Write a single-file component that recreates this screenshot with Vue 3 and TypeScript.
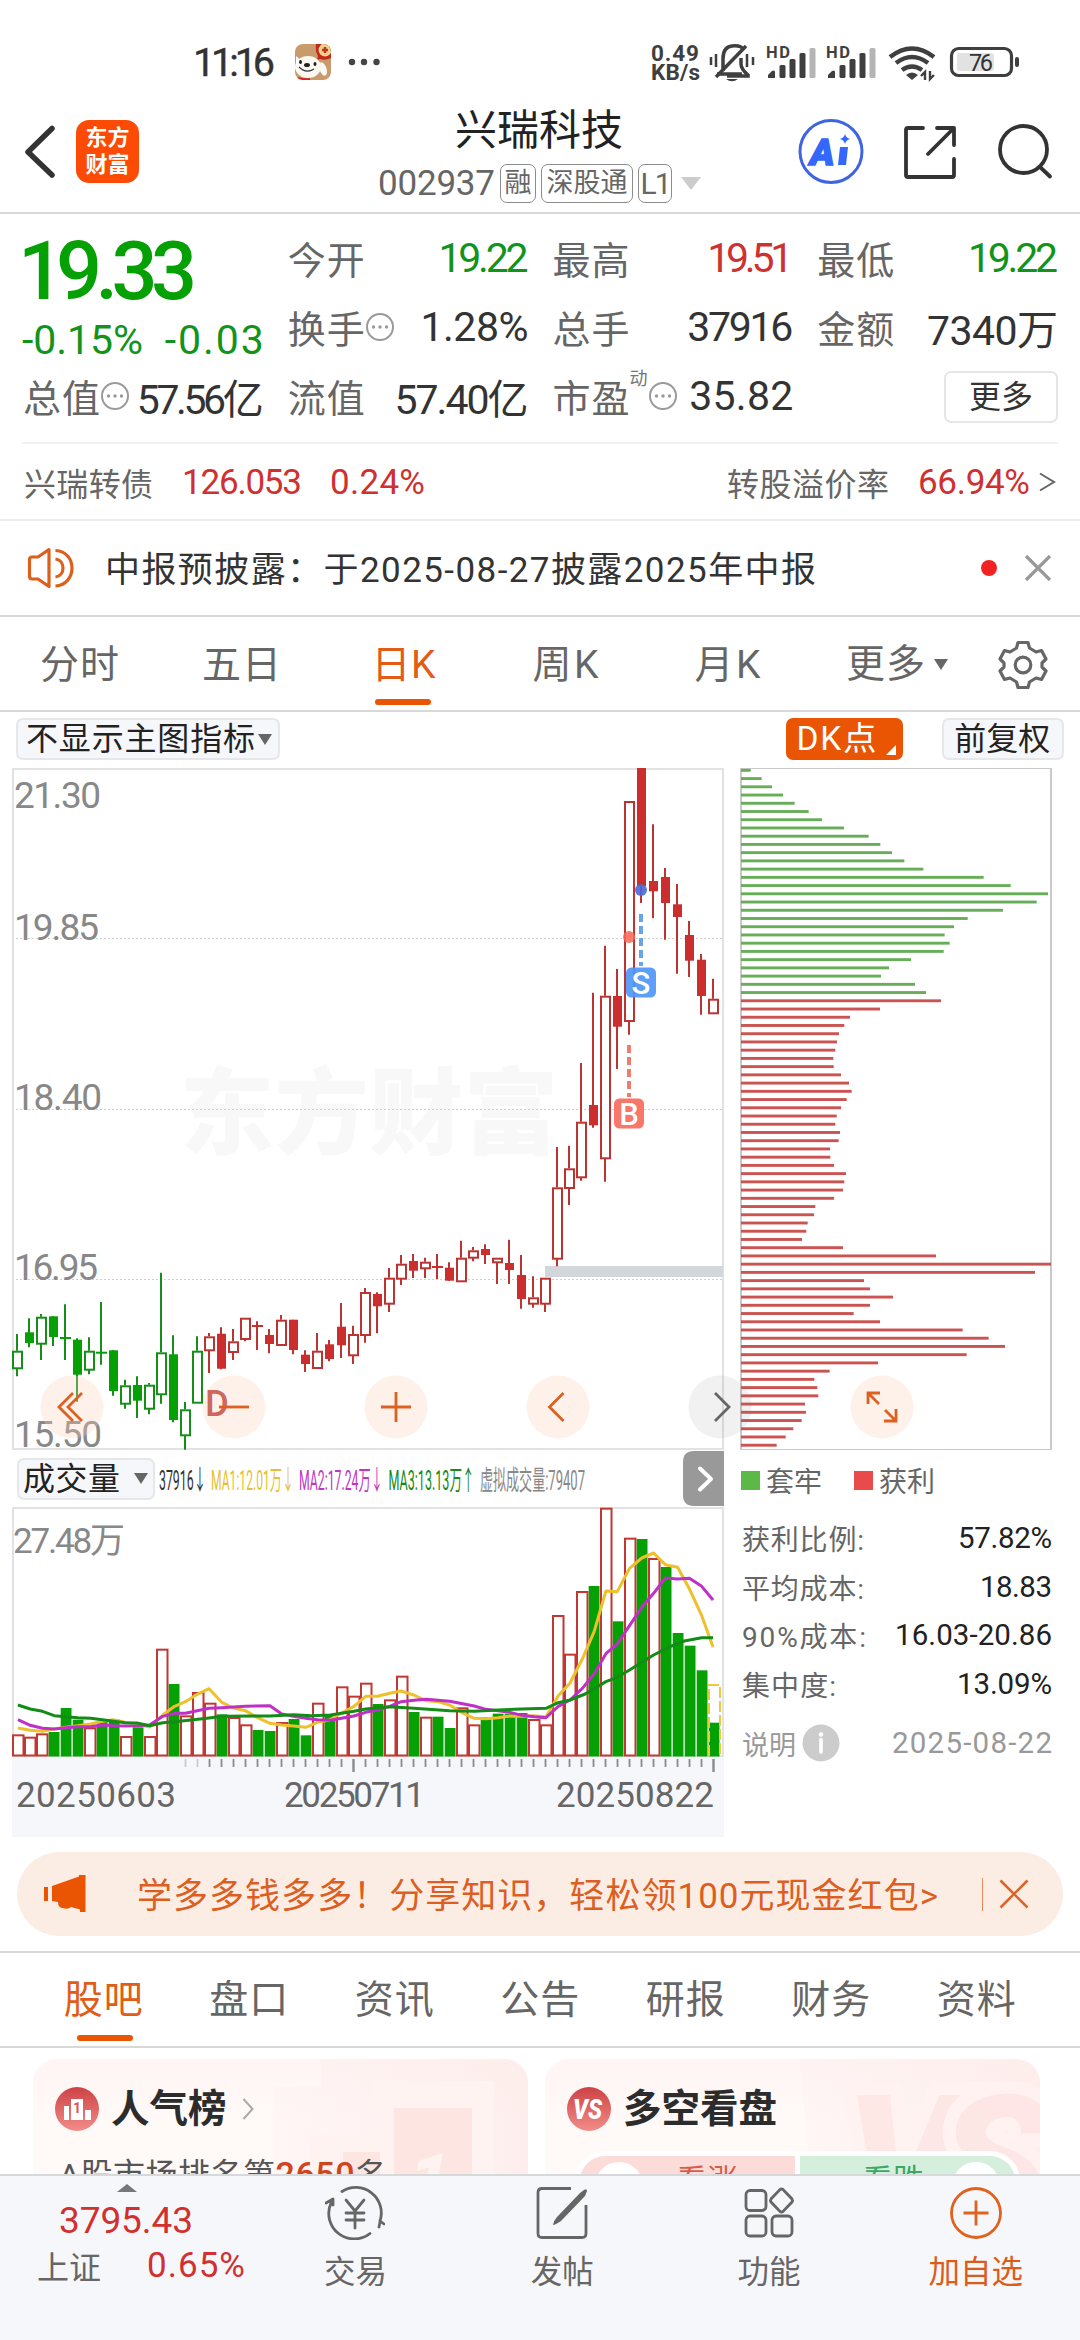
<script setup lang="ts">
import type { Directive } from 'vue'

/* Spreads the letters of a label over a fixed advance width. */
const vFit: Directive<HTMLElement, number> = {
  mounted(el, binding) {
    const count = Array.from((el.textContent ?? '').trim()).length
    if (count < 2) return
    const step = (binding.value - el.getBoundingClientRect().width) / (count - 1)
    el.style.letterSpacing = step.toFixed(3) + 'px'
    el.style.marginRight = (-step).toFixed(3) + 'px'
  },
}

interface Quote { label: string; value: string; tone?: string; width: number; info?: boolean; sup?: string }
const quotes: Quote[] = [
  { label: '今开', value: '19.22', tone: 'down', width: 90 },
  { label: '最高', value: '19.51', tone: 'up', width: 86 },
  { label: '最低', value: '19.22', tone: 'down', width: 90 },
  { label: '换手', value: '1.28%', width: 108, info: true },
  { label: '总手', value: '37916', width: 106 },
  { label: '金额', value: '7340万', width: 131 },
  { label: '总值', value: '57.56亿', width: 127, info: true },
  { label: '流值', value: '57.40亿', width: 134 },
  { label: '市盈', value: '35.82', width: 104, info: true, sup: '动' },
]

/* [high, body top, body bottom, low, kind]  kind: 0 hollow, 1 filled, 2 cross */
const candles: number[][] = [
  [1335, 1351.7, 1369.3, 1377.3, 0], [1319.3, 1333.3, 1344, 1348.3, 1], [1315, 1317.7, 1344.7, 1361, 0],
  [1317.3, 1317.3, 1338, 1347, 1], [1305.3, 1338, 1340, 1361, 2], [1339.3, 1340.7, 1375.7, 1402.7, 1],
  [1338.3, 1351.7, 1370.7, 1375.3, 0], [1303, 1352.7, 1354.7, 1365.7, 2], [1351.3, 1351.3, 1392, 1396.7, 1],
  [1380.7, 1386.3, 1404.7, 1409.7, 0], [1377.3, 1386, 1401.7, 1419, 1], [1384, 1385.7, 1409.7, 1415.3, 0],
  [1273.7, 1353.3, 1395.3, 1404.7, 0], [1336.3, 1355.3, 1421, 1423.3, 1], [1403, 1410.3, 1436.3, 1450.7, 0],
  [1337.3, 1351.7, 1403.7, 1403.7, 0], [1334, 1337.3, 1351.3, 1374, 0], [1328.3, 1334.7, 1369.7, 1370.3, 1],
  [1330, 1342.3, 1353, 1361, 0], [1318.7, 1318.7, 1340, 1342.3, 0], [1322.3, 1326, 1328, 1351, 2],
  [1330, 1336, 1345, 1354.3, 1], [1316, 1320.7, 1346, 1346, 0], [1320.7, 1320.7, 1351, 1355.3, 1],
  [1351.3, 1355.7, 1365, 1373, 1], [1334, 1351.7, 1369, 1369, 0], [1341, 1345.3, 1360, 1362.3, 1],
  [1304, 1327.7, 1346.3, 1359, 1], [1326.7, 1335, 1356.3, 1365, 0], [1289, 1293, 1336, 1343.7, 0],
  [1293.3, 1295, 1307.3, 1334.3, 1], [1269, 1278.7, 1304.7, 1313, 0], [1256, 1264.7, 1279.7, 1286, 0],
  [1255, 1262, 1271.7, 1279, 1], [1258.7, 1262.7, 1269.3, 1279, 0], [1255, 1267, 1269, 1280, 2],
  [1263.3, 1268.7, 1281.7, 1281.7, 1], [1241.7, 1258.7, 1282.3, 1282.3, 0], [1248, 1251.3, 1258.7, 1262.3, 0],
  [1245.3, 1250, 1256, 1265, 1], [1258.7, 1258.7, 1263.3, 1285, 0], [1240.7, 1264, 1271, 1285, 1],
  [1256, 1276, 1300, 1309.7, 1], [1277.3, 1298.3, 1304.7, 1308.7, 0], [1278.7, 1278.7, 1304.7, 1313, 0],
  [1148, 1188.3, 1259.7, 1267.3, 0], [1146.7, 1169.3, 1189, 1206, 0], [1064, 1122.7, 1178.3, 1181.7, 0],
  [993.7, 1106, 1126.3, 1128.7, 1], [946.7, 996.7, 1159.3, 1182.7, 0], [970, 997, 1027.7, 1070, 1],
  [802, 802, 1022, 1035.7, 0], [769, 769, 887, 904, 1], [825.3, 882, 892.3, 919.3, 1],
  [869, 878, 904, 940.7, 1], [885, 905.3, 918, 974.7, 1], [922, 936, 961.7, 978, 1],
  [955, 960.7, 997, 1015.7, 1], [979.7, 999.7, 1014.3, 1014.3, 0],
]
const DIV_DAY = 16
const candleTone = (i: number): string => (i < DIV_DAY ? 'g' : 'r')

/* Top edge of each volume bar; positive = rising (outlined), negative = falling (solid). */
const volumes: number[] = [
  766, 773, 763, -759, -687, -722, 745, -727, -722, 771, -745, 771, 509, -615, 709, 639, 671, -706, 714, 736,
  -753, -756, 729, -720, -769, 671, -706, 622, 650, 611, -675, 661, 590, -699, 713, -713, -747, 685, 736, -715,
  -704, -704, -702, 720, 736, 408, 524, 336, -321, 86, -427, 176, -180, 237, -264, -462, -500, -574, -731,
]
const bars = volumes.map((v, i) => ({ x: 12 + i * 12, y: 1480 + Math.abs(v) / 3, solid: v < 0 }))
const ticks = Array.from({ length: 45 }, (_, k) => k + 14)

const ma1 = '38,747 64,754 90,757 115,750 140,745 165,740 192,735 217,727 240,722 265,730 290,735 317,744 345,708 370,682 393,668 418,646 443,629 470,670 495,687 520,695 545,715 572,733 597,738 622,741 648,745 673,730 698,723 724,702 750,682 775,652 800,652 826,643 850,636 877,648 903,665 928,668 953,678 980,702 1005,718 1030,719 1055,716 1081,711 1106,712 1132,710 1157,714 1183,650 1208,612 1234,540 1259,458 1284,336 1308,338 1334,268 1360,237 1385,222 1410,257 1436,265 1461,330 1487,410 1511,504'
const ma2 = '38,722 64,739 90,748 115,750 140,746 165,743 192,743 217,738 240,740 265,741 290,740 317,738 345,712 370,703 393,703 418,695 443,688 470,686 520,682 572,680 597,705 622,712 648,718 673,722 700,724 750,711 775,700 800,693 826,682 850,668 877,664 903,661 953,667 1005,681 1030,691 1081,700 1106,709 1132,713 1157,716 1183,682 1208,663 1234,628 1259,585 1284,524 1308,495 1334,440 1360,385 1385,343 1410,297 1436,300 1461,298 1487,322 1511,363'
const ma3 = '38,678 64,690 90,697 115,710 140,713 165,716 192,718 217,722 265,731 290,732 317,740 345,731 370,728 400,724 443,717 470,712 572,711 622,707 660,710 700,708 750,697 775,690 826,683 877,688 953,695 1005,697 1055,693 1106,690 1157,688 1183,671 1208,663 1240,645 1284,608 1308,595 1334,573 1385,528 1420,503 1450,486 1487,476 1511,476'

const TRAPPED = 28
const chips: number[] = [
  62, 95, 126, 159, 194, 236, 276, 342, 416, 451, 486, 523, 580, 761, 842, 954, 920, 819, 713, 672, 644, 659, 641,
  543, 477, 453, 555, 588, 633, 450, 360, 343, 327, 321, 316, 310, 311, 333, 357, 365, 350, 333, 320, 316, 330, 326,
  300, 301, 312, 348, 343, 339, 312, 256, 252, 233, 229, 216, 339, 618, 963, 915, 402, 420, 489, 420, 371, 450, 698,
  776, 825, 710, 444, 299, 253, 262, 265, 225, 228, 215, 190, 167, 140,
].map((v) => (v - 33) / 3)

const periods = [
  { t: '分时', w: 79 }, { t: '五日', w: 79 }, { t: '日K', w: 64 }, { t: '周K', w: 66 }, { t: '月K', w: 66 },
]
const infoTabs = ['股吧', '盘口', '资讯', '公告', '研报', '财务', '资料']
const stats = [
  { k: '获利比例:', kw: 122, v: '57.82%', w: 94 },
  { k: '平均成本:', kw: 122, v: '18.83', w: 72 },
  { k: '90%成本:', kw: 124, v: '16.03-20.86', w: 157 },
  { k: '集中度:', kw: 94, v: '13.09%', w: 95 },
]
</script>

<template>
  <div class="app">
    <header class="status">
      <span v-fit="82" class="clock">11:16</span>
      <svg class="pet" viewBox="0 0 36 36">
        <defs><clipPath id="pet"><rect width="36" height="36" rx="8" /></clipPath></defs>
        <g clip-path="url(#pet)">
          <rect width="36" height="36" fill="#c89a6c" />
          <path d="M21 0h15v14q-6 3-11 1l-3 1 1-4q-3-5-2-12z" fill="#c2281c" />
          <circle cx="30" cy="6" r="6.500" fill="#f3d28e" />
          <path d="M30 3v6M27 6h6" stroke="#b73a20" stroke-width="2.500" />
          <ellipse cx="13" cy="23" rx="13" ry="11" fill="#fbf8f2" />
          <ellipse cx="28" cy="25" rx="3.500" ry="7" fill="#fbf8f2" transform="rotate(-20 28 25)" />
          <path d="M1 12l5 4-5 6z" fill="#fff" />
          <ellipse cx="5.500" cy="18" rx="1.500" ry="2" fill="#222" /><ellipse cx="20" cy="20" rx="1.500" ry="2" fill="#222" />
          <ellipse cx="12" cy="21" rx="3" ry="2" fill="#222" />
          <path d="M4 23q7 7 15 2" fill="none" stroke="#333" stroke-width="1.200" />
          <path d="M3 34q6 2 12 1" stroke="#d22" stroke-width="2" fill="none" />
        </g>
      </svg>
      <svg class="dots" viewBox="0 0 34 8"><g fill="#444"><circle cx="5" cy="4" r="3.200" /><circle cx="17" cy="4" r="3.200" /><circle cx="29.500" cy="4" r="3.200" /></g></svg>
      <div class="speed"><span v-fit="48">0.49</span><span v-fit="49">KB/s</span></div>
      <svg class="sys" viewBox="706 40 316 44">
        <g fill="none" stroke="#3f3f3f" stroke-width="3">
          <path d="M722 71V59q0-12 9-13t12 4M716 74h25" stroke-width="3.500" />
          <path d="M715 77L745 46" stroke-width="3.500" />
          <path d="M740 58v6q0 5 7 11v1h-21" stroke-width="3.500" />
          <path d="M710 57v8M715 54v13M746 54v13M752 57v8" stroke-width="2.500" />
        </g>
        <path d="M725 79h12q-6 4.500-12 0z" fill="#3f3f3f" />
        <g v-for="dx in [0, 60]" :key="dx" :transform="`translate(${dx} 0)`" fill="#3f3f3f">
          <text x="765" y="58" font-size="16.500" font-weight="700" textLength="24">HD</text>
          <path d="M767 75l4-4q3-1.500 3 1v6h-7z" />
          <rect x="778.500" y="65" width="6" height="13" rx="1.500" /><rect x="788.500" y="59" width="6" height="19" rx="1.500" />
          <rect x="798.500" y="53" width="6" height="25" rx="1.500" /><rect x="808.500" y="48" width="6" height="30" rx="1.500" fill="#b5b5b5" />
        </g>
        <g fill="none" stroke="#3f3f3f" stroke-width="4.500">
          <path d="M889 57q22-17 44 0" /><path d="M895 63q16-12 32 0" /><path d="M901 70q10-7 20 0" />
        </g>
        <path d="M905 75q6-5 12 0l-6 5z" fill="#3f3f3f" />
        <path d="M924 80v-8l-4 4M929 71v8l4-4" fill="none" stroke="#3f3f3f" stroke-width="2.400" />
        <rect x="950.500" y="48.500" width="60" height="27" rx="7" fill="none" stroke="#3f3f3f" stroke-width="3.200" />
        <rect x="956" y="53" width="37" height="18" rx="3" fill="#e2e2e2" />
        <rect x="1014" y="57" width="4" height="10" rx="2" fill="#3f3f3f" />
        <text x="968" y="71" font-size="23.500" fill="#333" textLength="24">76</text>
      </svg>
    </header>

    <section class="head">
      <svg class="back" viewBox="0 0 32 54"><path d="M28 3.500L4 27L28 50" fill="none" stroke="#333" stroke-width="5.500" stroke-linecap="round" stroke-linejoin="round" /></svg>
      <div class="logo"><span>东方</span><span>财富</span></div>
      <div class="title">
        <div class="name">兴瑞科技</div>
        <div class="code">
          <span v-fit="117" class="num">002937</span>
          <i class="tag t1">融</i><i class="tag t2">深股通</i><i class="tag t3">L1</i>
          <svg class="drop" viewBox="0 0 20 13"><path d="M0 0h20L10 13z" fill="#ccc" /></svg>
        </div>
      </div>
      <svg class="acts" viewBox="796 116 260 70">
        <circle cx="831" cy="151.500" r="31" fill="none" stroke="#3e64e2" stroke-width="3" />
        <text x="810" y="164.500" font-size="37" font-weight="900" font-style="italic" fill="#3467fb" textLength="24" stroke="#3467fb" stroke-width="1.500">A</text>
        <path d="M840 147h8l-2 18h-8z" fill="#3467fb" />
        <path d="M845 134q1 4 5 5q-4 1-5 5q-1-4-5-5q4-1 5-5z" fill="#3467fb" />
        <g fill="none" stroke="#333" stroke-width="3.800" stroke-linecap="round" stroke-linejoin="round">
          <path d="M923 128H908q-2 0-2 2v45q0 2 2 2h44q2 0 2-2V159" />
          <path d="M937 128h17v17M953 129L928 154" />
          <circle cx="1023.500" cy="149.500" r="23.500" /><path d="M1040 167l10 9.500" />
        </g>
      </svg>
    </section>

    <section class="quote">
      <div class="last">
        <div class="price"><span class="one">1</span><span v-fit="141">9.33</span></div>
        <div class="chg"><span v-fit="121">-0.15%</span><span v-fit="99">-0.03</span></div>
      </div>
      <div v-for="q in quotes" :key="q.label" class="cell">
        <span class="lab">{{ q.label }}</span>
        <sup v-if="q.sup">{{ q.sup }}</sup>
        <svg v-if="q.info" class="more-dot" viewBox="0 0 30 30">
          <circle cx="15" cy="15" r="13" fill="none" stroke="#9a9a9a" stroke-width="2" />
          <g fill="#999"><circle cx="8.500" cy="15" r="1.700" /><circle cx="15" cy="15" r="1.700" /><circle cx="21.500" cy="15" r="1.700" /></g>
        </svg>
        <b v-fit="q.width" :class="q.tone">{{ q.value }}</b>
      </div>
      <div class="cell end"><span class="btn">更多</span></div>
    </section>

    <section class="bond">
      <span v-fit="129">兴瑞转债</span><b v-fit="120" class="b1">126.053</b><b v-fit="95" class="b2">0.24%</b>
      <span v-fit="162" class="rate">转股溢价率</span><b v-fit="112" class="b3">66.94%</b>
      <svg viewBox="0 0 17 20"><path d="M1 1.500L15 10L1 18.500" fill="none" stroke="#666" stroke-width="2" /></svg>
    </section>

    <section class="notice">
      <svg class="horn" viewBox="26 546 50 44">
        <g fill="none" stroke="#dc5f1c" stroke-width="3.200" stroke-linejoin="round">
          <path d="M38 557H32q-2.500 0-2.500 3v16q0 3 2.500 3h6l11 7.500V549.500z" />
          <path d="M55.500 550.500c22 1 22 34 0 35.500M55.500 559c10 1 10 17 0 18" />
        </g>
      </svg>
      <span v-fit="711" class="msg">中报预披露：于2025-08-27披露2025年中报</span>
      <i class="red-dot"></i>
      <svg class="x" viewBox="0 0 28 28"><path d="M2 2l24 24M26 2L2 26" stroke="#999" stroke-width="3.200" /></svg>
    </section>

    <nav class="periods">
      <span v-for="p in periods" :key="p.t" class="period" :class="{ on: p.t === '日K' }"><span v-fit="p.w">{{ p.t }}</span></span>
      <span class="period more">更多<svg viewBox="0 0 14 11"><path d="M0 0h14L7 11z" fill="#666" /></svg></span>
      <svg class="gear" viewBox="-25 -25 50 50">
        <g fill="none" stroke="#666" stroke-width="3.200" stroke-linejoin="round">
          <path d="M-5-22.500H5L6.500-17L13-13L18.500-14.500L23-6L19-2V2L23 6L18.500 14.500L13 13L6.500 17L5 22.500H-5L-6.500 17L-13 13L-18.500 14.500L-23 6L-19 2V-2L-23-6L-18.500-14.500L-13-13L-6.500-17Z" />
          <circle r="7.800" />
        </g>
      </svg>
    </nav>

    <div class="toolbar">
      <span class="chip c1"><span v-fit="229">不显示主图指标</span><svg viewBox="0 0 14 11"><path d="M0 0h14L7 11z" fill="#666" /></svg></span>
      <span class="chip dk"><span v-fit="80">DK点</span><svg viewBox="0 0 10 10"><path d="M10 0v10H0z" fill="#fff" /></svg></span>
      <span class="chip c2">前复权</span>
    </div>

    <section class="charts">
      <div class="left">
        <svg class="kline" viewBox="12 769 713 682">
          <text class="wm" x="180" y="1148" textLength="378">东方财富</text>
          <g stroke="#cfcfcf" stroke-dasharray="2 2"><path d="M12 939.500H723M12 1110.500H723M12 1280.500H723" /></g>
          <path d="M13 1450V770H723V1450Z" fill="none" stroke="#e2e2e2" stroke-width="2" />
          <rect x="545" y="1267" width="178" height="11" fill="#d3d7db" />
          <g v-for="(c, i) in candles" :key="i" :class="candleTone(i)">
            <template v-if="c[4] === 0">
              <path :d="`M${17 + i * 12} ${c[0]}V${c[1]}M${17 + i * 12} ${c[2]}V${c[3]}`" />
              <rect class="hollow" :x="13 + i * 12" :y="c[1] + 1" width="9" :height="Math.max(1, c[2] - c[1] - 1)" />
            </template>
            <template v-else>
              <path :d="`M${17 + i * 12} ${c[0]}V${c[3]}`" />
              <rect class="solid" :x="(c[4] === 2 ? 12 : 13) + i * 12" :y="c[1]" :width="c[4] === 2 ? 11 : 9" :height="c[2] - c[1]" />
            </template>
          </g>
          <g class="axis">
            <text x="14" y="808.500" textLength="87">21.30</text><text x="14" y="941" textLength="85">19.85</text>
            <text x="14" y="1110.500" textLength="88">18.40</text><text x="14" y="1281" textLength="84">16.95</text>
            <text x="14" y="1447.500" textLength="88">15.50</text>
          </g>
          <text x="205" y="1417" font-size="36.500" font-weight="500" fill="#bb3a34">D</text>
          <circle cx="641" cy="891" r="6" fill="#4968d8" opacity=".9" /><circle cx="629" cy="938" r="6" fill="#fb6450" opacity=".85" />
          <path d="M641 915V967" stroke="#6ba3e8" stroke-width="4" stroke-dasharray="8 4" />
          <path d="M629 1046V1098" stroke="#ee7d70" stroke-width="4" stroke-dasharray="8 4" />
          <rect x="626" y="968.500" width="30" height="30" rx="5.500" fill="#4f96f8" opacity=".92" />
          <rect x="614" y="1099.500" width="30" height="30" rx="5.500" fill="#f9776a" />
          <text class="mark" x="641" y="994.500">S</text><text class="mark" x="629" y="1125.500">B</text>
        </svg>
        <div class="volbar">
          <span class="chip c3"><span v-fit="97">成交量</span><svg viewBox="0 0 14 11"><path d="M0 0h14L7 11z" fill="#666" /></svg></span>
          <svg class="mas" viewBox="158 1450 430 58">
            <g font-size="27">
              <text x="159" y="1490" textLength="47" lengthAdjust="spacingAndGlyphs" fill="#333">37916↓</text>
              <text x="211" y="1490" textLength="83" lengthAdjust="spacingAndGlyphs" fill="#e7bf35">MA1:12.01万↓</text>
              <text x="299" y="1490" textLength="84" lengthAdjust="spacingAndGlyphs" fill="#bd38c4">MA2:17.24万↓</text>
              <text x="388.500" y="1490" textLength="86" lengthAdjust="spacingAndGlyphs" fill="#168a18">MA3:13.13万↑</text>
              <text x="480" y="1490" textLength="105" lengthAdjust="spacingAndGlyphs" fill="#888">虚拟成交量:79407</text>
            </g>
          </svg>
          <svg class="next" viewBox="0 0 41 55"><path d="M11 0H41V55H11Q0 55 0 44V11Q0 0 11 0Z" fill="#999" /><path d="M17 17.500l11 10.500l-11 10.500" fill="none" stroke="#fff" stroke-width="4" stroke-linecap="round" stroke-linejoin="round" /></svg>
        </div>
        <svg class="volume" viewBox="12 1508 713 330">
          <rect x="12" y="1758" width="712" height="80" fill="#f6f7fa" />
          <path d="M13 1757V1509H723V1757Z" fill="none" stroke="#e2e2e2" stroke-width="2" />
          <template v-for="(b, i) in bars" :key="i">
            <rect v-if="b.solid" :x="b.x + 0.7" :y="b.y" width="10.800" :height="1757.5 - b.y" fill="#04a004" />
            <rect v-else :x="b.x + 1" :y="b.y + 1" width="10.500" :height="1755.5 - b.y" fill="#fff" stroke="#c03733" stroke-width="2" />
          </template>
          <path d="M709 1757V1686H720V1757" fill="none" stroke="#ecc93f" stroke-width="2" stroke-dasharray="11 3" />
          <g class="ma" transform="translate(0 1480) scale(.4719 .33333)">
            <polyline :points="ma1" stroke="#eec02c" /><polyline :points="ma2" stroke="#bf30c6" /><polyline :points="ma3" stroke="#138c17" />
          </g>
          <path v-for="t in ticks" :key="t" :d="`M${17.5 + t * 12} 1760V${t === 28 || t === 58 ? 1773 : 1768}`" stroke="#8b8b8b" :stroke-width="t === 28 || t === 58 ? 2.4 : 1.8" :opacity="t < 16 ? 0.4 : 1" />
          <g font-size="35" fill="#666"><text x="16" y="1808" textLength="160">20250603</text><text x="284" y="1808" textLength="141">20250711</text><text x="556" y="1808" textLength="158">20250822</text></g>
          <text x="13" y="1553.500" font-size="35" fill="#888" textLength="112">27.48万</text>
        </svg>
      </div>

      <aside class="right">
        <svg class="dist" viewBox="740 769 312 682">
          <path d="M741 769.500H1051M741 1450.500H1051" stroke="#c9c9c9" stroke-width="1" /><path d="M741 769V1451M1051 769V1451" stroke="#c9c9c9" stroke-width="2" />
          <rect v-for="(w, i) in chips" :key="i" x="741" :y="769.9 + i * 8.23" :width="w" height="2.900" :fill="i < TRAPPED ? '#68ae59' : '#cb5452'" />
        </svg>
        <div class="legend"><i class="sq g"></i><span>套牢</span><i class="sq r"></i><span>获利</span></div>
        <div v-for="s in stats" :key="s.k" class="stat"><span v-fit="s.kw">{{ s.k }}</span><b v-fit="s.w">{{ s.v }}</b></div>
        <div class="stat note">
          <span>说明</span>
          <svg viewBox="0 0 38 38"><circle cx="19" cy="19" r="18.500" fill="#ccc" /><circle cx="19" cy="10.500" r="2.300" fill="#fff" /><path d="M19 15.500V28" stroke="#fff" stroke-width="3.600" stroke-linecap="round" /></svg>
          <b v-fit="160">2025-08-22</b>
        </div>
      </aside>

      <div class="controls">
        <svg viewBox="-32 -32 64 64"><circle r="31.500" class="bub" /><path class="ln" d="M1-14L-13 0L1 14M10-14L-4 0L10 14" /></svg>
        <svg viewBox="-32 -32 64 64"><circle r="31.500" class="bub" /><path class="ln" d="M-15 0H15" /></svg>
        <svg viewBox="-32 -32 64 64"><circle r="31.500" class="bub" /><path class="ln" d="M-15 0H15M0-15V15" /></svg>
        <svg viewBox="-32 -32 64 64"><circle r="31.500" class="bub" /><path class="ln" d="M5.500-14L-8.500 0L5.500 14" /></svg>
        <svg viewBox="-32 -32 64 64"><circle r="31.500" fill="#777" opacity=".1" /><path d="M-5-14L9 0L-5 14" fill="none" stroke="#666" stroke-width="2.800" /></svg>
        <svg viewBox="-32 -32 64 64"><circle r="31.500" class="bub" /><path class="ln" d="M-14-3V-14H-2M-14-14L-3-3M14 2V14H2M14 14L3 3" /></svg>
      </div>
    </section>

    <div class="promo">
      <svg class="mega" viewBox="0 0 42 38"><path d="M0 12h4v14H0zM8 11L35 1.500V0h6.500v37H36v-2.500L27 32q-3 3-8 1-5 0-5-6L8 26z" fill="#ea5504" /></svg>
      <span v-fit="801">学多多钱多多！分享知识，轻松领100元现金红包&gt;</span>
      <i></i>
      <svg class="px" viewBox="0 0 30 30"><path d="M1.500 1.500l27 27M28.500 1.500l-27 27" stroke="#dd6428" stroke-width="2.600" /></svg>
    </div>

    <nav class="info-tabs"><span v-for="t in infoTabs" :key="t" :class="{ on: t === '股吧' }">{{ t }}</span></nav>

    <section class="feed">
      <article class="card">
        <svg class="deco" viewBox="0 0 495 117" preserveAspectRatio="none">
          <defs>
            <linearGradient id="fade" x1="0" y1="0" x2="1" y2="0"><stop offset="0" stop-color="#fdeceb" stop-opacity=".25" /><stop offset="1" stop-color="#fdeae8" stop-opacity=".7" /></linearGradient>
          </defs>
          <path d="M288 0H495V117H241V28H288Z" fill="url(#fade)" />
          <rect x="339" y="22" width="122" height="95" fill="#fff3f1" /><rect x="361" y="49" width="78" height="68" fill="#fde5e2" />
          <rect x="276" y="76" width="70" height="41" fill="#fff3f1" /><rect x="310" y="93" width="37" height="24" fill="#fde5e2" />
          <text x="376" y="146" font-size="72" font-weight="900" font-style="italic" fill="#fff3f1">1</text>
        </svg>
        <div class="card-head">
          <svg class="badge" viewBox="0 0 44 44"><circle cx="22" cy="22" r="22" fill="url(#bg1)" /><defs><linearGradient id="bg1" x2="0" y2="1"><stop stop-color="#cd4244" /><stop offset="1" stop-color="#f18d89" /></linearGradient></defs><path d="M9 19h5v14H9zM16 12h12v21H16zM30 23h6v10h-6z" fill="#fff" /><text x="18" y="26" font-size="14" font-weight="700" fill="#d75556">1</text></svg>
          <h3>人气榜</h3>
          <svg class="arr" viewBox="0 0 12 22"><path d="M1.500 1l9 10l-9 10" fill="none" stroke="#aaa" stroke-width="2" /></svg>
        </div>
        <p v-fit="328" class="rank">A股市场排名第<em>2650</em>名</p>
      </article>
      <article class="card">
        <svg class="deco" viewBox="0 0 495 117" preserveAspectRatio="none">
          <path d="M254 0H495V117H266Z" fill="url(#fade)" />
          <text x="300" y="165" font-size="182" font-weight="900" font-style="italic" fill="#fde3e1" stroke="#fff3f1" stroke-width="26" paint-order="stroke" textLength="205" opacity=".7">VS</text>
        </svg>
        <div class="card-head">
          <svg class="badge" viewBox="0 0 44 44"><circle cx="22" cy="22" r="22" fill="url(#bg1)" /><text x="6" y="32" font-size="27" font-weight="900" font-style="italic" fill="#fff" textLength="29" lengthAdjust="spacingAndGlyphs">VS</text></svg>
          <h3>多空看盘</h3>
        </div>
        <div class="vote"><span class="bull"><i></i>看涨</span><span class="bear">看跌<i></i></span></div>
      </article>
    </section>

    <footer class="dock">
      <div class="index">
        <svg viewBox="0 0 20 8"><path d="M0 8L10 0L20 8z" fill="#777" /></svg>
        <b v-fit="134" class="pt">3795.43</b>
        <div><span>上证</span><b v-fit="98">0.65%</b></div>
      </div>
      <div class="item">
        <svg viewBox="-30 -27 60 54"><g fill="none" stroke="#666" stroke-width="2.800" stroke-linecap="round" stroke-linejoin="round"><path d="M-13-21.500A25.500 25.500 0 0 1 25 8M25 8l4 3M25 9l-1 5M15 20.500A25.500 25.500 0 0 1-24-10M-29-10l7-4V-8" /><path d="M-9-13L0-2L9-13M0-2V15M-9 0H9M-9 7H9" /></g></svg>
        <span>交易</span>
      </div>
      <div class="item">
        <svg viewBox="-30 -27 60 54"><g fill="none" stroke="#666" stroke-width="2.800"><path d="M9-24.500H-20q-4 0-4 4v41q0 4 4 4H20q4 0 4-4V-8" /></g><path d="M18-20l4-3q3-2 3 1l-2 5L-1 8q-6 4-8 4 1-5 4-8z" fill="#666" /></svg>
        <span>发帖</span>
      </div>
      <div class="item">
        <svg viewBox="-30 -27 60 54"><g fill="none" stroke="#666" stroke-width="2.800"><rect x="-23" y="-22.500" width="20" height="20" rx="4" /><rect x="-23" y="3" width="20" height="20" rx="4" /><rect x="3" y="3" width="20" height="20" rx="4" /><path d="M11-23.500q1.500-1 3 0l9 9.500q1 1.500 0 3l-9 9.500q-1.500 1-3 0l-9-9.500q-1-1.500 0-3z" /></g></svg>
        <span>功能</span>
      </div>
      <div class="item hot">
        <svg viewBox="-30 -27 60 54"><g fill="none" stroke="#e0621f" stroke-width="2.800"><circle r="24.500" /><path d="M-12.500 0H12.500M0-12.500V12.500" /></g></svg>
        <span>加自选</span>
      </div>
    </footer>
  </div>
</template>

<style>
html, body { margin: 0; background: #fff; }
</style>

<style scoped>
.app { width: 1080px; height: 2340px; overflow: hidden; background: #fff; display: flex; flex-direction: column; font-family: Roboto, "Noto Sans CJK SC", sans-serif; color: #333; white-space: nowrap; }
.app * { box-sizing: border-box; }
.app > * { flex: none; }
b { font-weight: 400; }
i, em { font-style: normal; }
svg { display: block; flex: none; }

.status { height: 104px; padding-top: 20px; display: flex; align-items: center; }
.clock { font-size: 39.500px; color: #333; margin-left: 193px; -webkit-text-stroke: .4px #333; }
.pet { width: 36px; height: 36px; position: relative; margin-left: 20px; }
.dots { width: 34px; height: 8px; margin-left: 16px; }
.speed { margin-left: 270px; width: 56px; display: flex; flex-direction: column; align-items: flex-start; font-size: 22.500px; line-height: 19px; font-weight: 700; color: #3f3f3f; padding-top: 2px; }
.sys { width: 316px; height: 44px; }

.head { height: 110px; border-bottom: 2px solid #d8d8d8; display: flex; align-items: flex-start; }
.back { width: 32px; height: 54px; margin: 21px 0 0 24px; }
.logo { width: 63px; height: 63px; margin: 16px 0 0 20px; border-radius: 13px; background: #fd4a04; color: #fff; font-size: 22px; line-height: 27px; font-weight: 700; display: flex; flex-direction: column; align-items: center; padding-top: 4px; }
.title { width: 330px; margin-left: 239px; }
.name { margin: 4px 0 0 77px; font-size: 42px; line-height: 46px; color: #222; }
.code { display: flex; align-items: center; height: 40px; margin-top: 9px; color: #666; }
.num { font-size: 35px; }
.tag { border: 1.500px solid #8c8c8c; border-radius: 7px; height: 39px; line-height: 37px; font-size: 27px; text-align: center; margin-left: 5px; }
.t1 { width: 36px; margin-left: 5px; }
.t2 { width: 92px; }
.t3 { width: 34px; font-size: 30px; letter-spacing: -2px; }
.drop { width: 20px; height: 13px; margin-left: 9px; }
.acts { width: 260px; height: 70px; margin: 12px 0 0 88px; }

.quote { height: 229px; padding: 9px 22px 0 24px; display: grid; grid-template-columns: repeat(4, 1fr); grid-template-rows: repeat(3, 69px); column-gap: 25px; position: relative; color: #333; }
.quote::after { content: ""; position: absolute; left: 22px; right: 22px; bottom: -1px; height: 2px; background: #f1f1f1; }
.last { grid-row: 1 / 3; padding-top: 8px; color: #04a004; }
.price { height: 80px; line-height: 82px; font-size: 81px; font-weight: 500; margin-left: -6px; }
.one { letter-spacing: -8px; }
.chg { margin: 6px 0 0 -2px; height: 46px; line-height: 46px; font-size: 41px; display: flex; justify-content: space-between; color: #12931a; }
.cell { display: flex; align-items: center; height: 69px; }
.lab { font-size: 38px; letter-spacing: 1px; color: #666; margin-right: -1px; margin-left: -1px; }
.cell b { margin-left: auto; font-size: 41px; }
.cell sup { font-size: 18px; line-height: 18px; color: #777; align-self: flex-start; margin-top: 9px; }
.more-dot { width: 30px; height: 30px; }
.up { color: #cc3231; }
.down { color: #12931a; }
.end { justify-content: flex-end; }
.btn { width: 114px; height: 52px; margin-top: 2px; border: 2px solid #e6e6e6; border-radius: 7px; text-align: center; font-size: 32px; line-height: 48px; color: #333; }

.bond { height: 78px; padding: 2px 24px 0; border-bottom: 2px solid #eee; display: flex; align-items: center; font-size: 32px; color: #666; }
.bond b { color: #cf3030; font-size: 35px; }
.b1 { margin-left: 29px; }
.b2 { margin-left: 28px; }
.rate { margin-left: auto; }
.b3 { margin-left: 29px; }
.bond svg { width: 17px; height: 20px; margin-left: 9px; }

.notice { height: 96px; border-bottom: 2px solid #dadada; display: flex; align-items: center; }
.horn { width: 50px; height: 44px; margin-left: 26px; }
.msg { margin-left: 29px; font-size: 35px; color: #333; margin-bottom: 3px; }
.red-dot { width: 16px; height: 16px; border-radius: 50%; background: #f12222; margin-left: auto; }
.x { width: 28px; height: 28px; margin: 0 28px 0 27px; }

.periods { height: 95px; border-bottom: 2px solid #d8d8d8; display: grid; grid-template-columns: repeat(5, 162px) 172px 1fr; align-items: center; font-size: 39px; color: #666; }
.period { position: relative; display: flex; justify-content: center; height: 95px; line-height: 97px; padding-right: 3px; }
.on { color: #e15c16; }
.period.on::after { content: ""; position: absolute; left: 51px; top: 82px; width: 56px; height: 6px; border-radius: 3px; background: #ea5504; }
.period.more { align-items: center; justify-content: flex-start; padding-left: 36px; letter-spacing: 1px; }
.more svg { width: 14px; height: 11px; margin-left: 8px; }
.gear { width: 50px; height: 50px; margin-left: 16px; }

.toolbar { height: 56px; padding: 6px 16px 0; display: flex; align-items: flex-start; }
.chip { display: flex; align-items: center; height: 42px; background: #f6f7fa; border: 2px solid #e6e7ea; border-radius: 7px; font-size: 32px; line-height: 38px; color: #222; padding-left: 8px; }
.chip svg { width: 14px; height: 11px; }
.c1 { width: 265px; }
.c1 svg { margin-left: 3px; }
.dk { width: 117px; margin-left: 506px; background: #ea5504; border-color: #ea5504; color: #fff; position: relative; font-size: 33.500px; }
.dk svg { position: absolute; width: 10px; height: 10px; right: 5px; bottom: 3px; }
.c2 { width: 122px; margin-left: 39px; padding-left: 10px; }

.charts { position: relative; height: 1069px; padding-left: 12px; display: flex; }
.left { width: 713px; }
.kline { width: 713px; height: 682px; overflow: visible; }
.wm { font-size: 94px; font-weight: 900; fill: #f8f8f8; }
.axis { font-size: 37px; fill: #888; }
.g path, .g .hollow { stroke: #168f19; stroke-width: 2; }
.r path, .r .hollow { stroke: #bc3432; stroke-width: 2; }
.hollow { fill: #fff; }
.g .solid { fill: #04a004; }
.r .solid { fill: #cb2e2d; }
.mark { font-size: 31px; font-weight: 500; fill: #fff; text-anchor: middle; }
.volbar { height: 57px; display: flex; align-items: center; position: relative; }
.c3 { width: 138px; margin-left: 5px; padding-left: 4px; }
.c3 svg { margin-left: 14px; }
.mas { width: 430px; height: 58px; margin-left: 3px; overflow: visible; }
.next { position: absolute; width: 41px; height: 55px; right: 1px; top: 1px; }
.volume { width: 713px; height: 330px; }
.ma polyline { fill: none; stroke-width: 3; vector-effect: non-scaling-stroke; stroke-linejoin: round; }

.right { width: 312px; margin-left: 15px; }
.dist { width: 312px; height: 682px; }
.legend { height: 60px; display: flex; align-items: center; font-size: 28px; color: #666; padding-left: 1px; margin-bottom: 4px; }
.sq { width: 19px; height: 19px; margin-right: 6px; }
.sq.g { background: #5cb947; }
.sq.r { background: #e84b49; margin-left: 32px; }
.stat { height: 48.500px; display: flex; align-items: center; font-size: 28px; color: #666; padding: 0 0 0 2px; }
.stat b { margin-left: auto; font-size: 29.500px; color: #222; }
.note { color: #999; margin-top: 11px; font-size: 27px; }
.note b { color: #999; }
.note svg { width: 38px; height: 38px; margin-left: 6px; }

.controls { position: absolute; left: 40px; top: 607px; display: flex; gap: 98px; }
.controls svg { width: 64px; height: 64px; }
.bub { fill: #fdd2ba; opacity: .3; }
.ln { fill: none; stroke: #dd6020; stroke-width: 2.800; }

.promo { height: 84px; margin: 15px 17px 0; border-radius: 42px; background: #fcede4; display: flex; align-items: center; color: #dc5f1f; font-size: 35px; }
.mega { width: 42px; height: 38px; margin-left: 27px; }
.promo > span { margin-left: 51px; margin-bottom: 3px; }
.promo i { width: 1px; height: 33px; background: #e58b5e; margin-left: auto; }
.px { width: 30px; height: 30px; margin: 0 34px 0 16px; }

.info-tabs { height: 97px; margin-top: 15px; border-top: 2px solid #d8d8d8; border-bottom: 2px solid #d8d8d8; padding-left: 31px; display: flex; font-size: 39px; line-height: 95px; color: #666; letter-spacing: 1px; }
.info-tabs span { width: 145.500px; text-align: center; position: relative; }
.info-tabs .on::after { content: ""; position: absolute; left: 46px; top: 82px; width: 56px; height: 6px; border-radius: 3px; background: #ea5504; }

.feed { height: 126px; padding: 11px 33px 0; display: flex; gap: 17px; overflow: hidden; }
.card { width: 495px; height: 300px; border-radius: 24px; overflow: hidden; background: linear-gradient(#fef5f4, #fff9f8 60px); position: relative; }
.deco { position: absolute; left: 0; top: 0; width: 495px; height: 117px; }
.card-head { position: relative; display: flex; align-items: center; padding: 22px 0 0 22px; height: 78px; }
.badge { width: 44px; height: 44px; }
h3 { margin: 0 0 0 12px; font-size: 38.500px; font-weight: 700; line-height: 56px; color: #2c2c2c; }
.arr { width: 12px; height: 22px; margin-left: 15px; }
.rank { position: relative; margin: 15px 0 0 26px; font-size: 32px; line-height: 44px; color: #555; width: max-content; }
.rank em { color: #d0451b; font-weight: 500; font-size: 34px; }
.vote { position: relative; margin: 14px 20px 0 30px; height: 60px; border: 5px solid #fff; border-radius: 30px; display: flex; gap: 5px; background: #fff; overflow: hidden; font-size: 31px; line-height: 50px; }
.vote span { flex: 1; display: flex; align-items: center; }
.vote i { width: 48px; height: 48px; border-radius: 50%; background: #fff; margin: 9px 15px 0; }
.bull { background: #fcdcd9; color: #d85c4c; gap: 18px; }
.bear { background: #d5efdc; color: #3aa866; justify-content: flex-end; gap: 13px; }

.dock { height: 166px; border-top: 2px solid #d6d8da; background: #f6f7fa; display: flex; color: #666; }
.index { width: 252px; display: flex; flex-direction: column; align-items: center; color: #666; font-size: 32px; }
.index svg { width: 20px; height: 8px; margin: 8px 0 0 2px; }
.index b { color: #d1302f; }
.pt { font-size: 37px; line-height: 44px; margin-top: 7px; }
.index div { display: flex; align-items: center; height: 44px; gap: 46px; margin-left: 30px; }
.index div b { font-size: 35px; }
.item { width: 206.800px; display: flex; flex-direction: column; align-items: center; font-size: 31.500px; line-height: 46px; }
.item svg { width: 60px; height: 54px; margin: 10px 0 10px; }
.hot { color: #dd5c1b; }
</style>
